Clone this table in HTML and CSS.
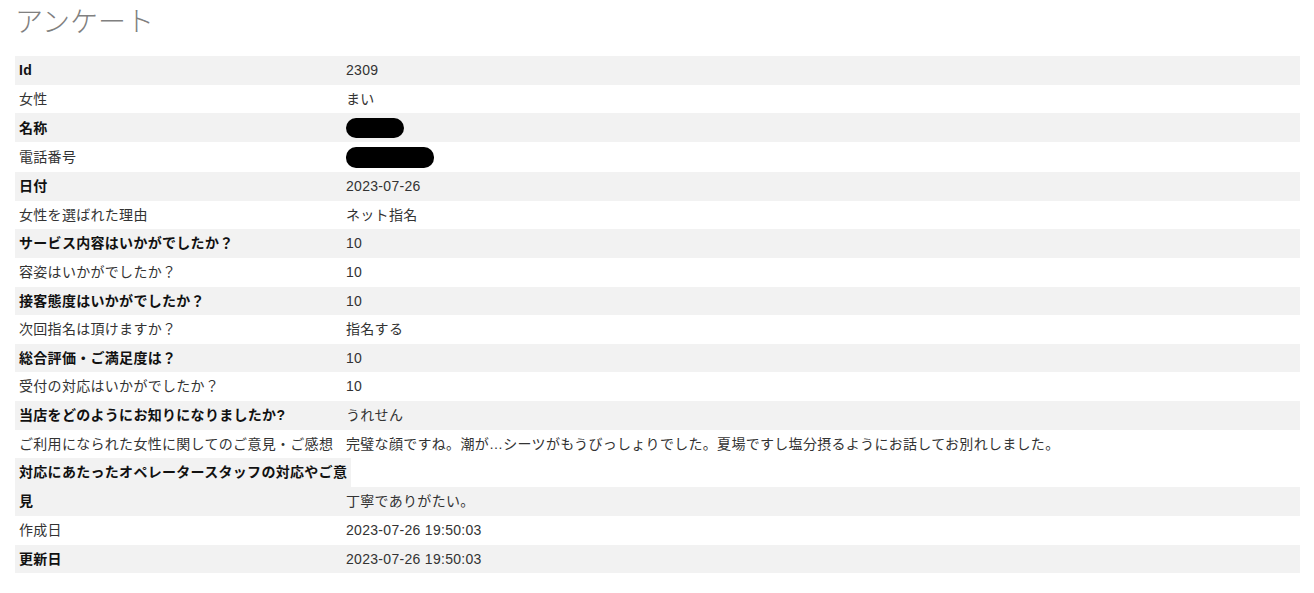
FILE: index.html
```html
<!DOCTYPE html>
<html lang="ja">
<head>
<meta charset="utf-8">
<title>アンケート</title>
<link rel="stylesheet" href="styles.css">
</head>
<body>
<div class="page">
  <h1 class="title">アンケート</h1>
  <dl class="details">
    <div class="row"><dt>Id</dt><dd>2309</dd></div>
    <div class="row"><dt>女性</dt><dd>まい</dd></div>
    <div class="row"><dt>名称</dt><dd><span class="redact redact-name"></span></dd></div>
    <div class="row"><dt>電話番号</dt><dd><span class="redact redact-phone"></span></dd></div>
    <div class="row"><dt>日付</dt><dd>2023-07-26</dd></div>
    <div class="row"><dt>女性を選ばれた理由</dt><dd>ネット指名</dd></div>
    <div class="row"><dt>サービス内容はいかがでしたか？</dt><dd>10</dd></div>
    <div class="row"><dt>容姿はいかがでしたか？</dt><dd>10</dd></div>
    <div class="row"><dt>接客態度はいかがでしたか？</dt><dd>10</dd></div>
    <div class="row"><dt>次回指名は頂けますか？</dt><dd>指名する</dd></div>
    <div class="row"><dt>総合評価・ご満足度は？</dt><dd>10</dd></div>
    <div class="row"><dt>受付の対応はいかがでしたか？</dt><dd>10</dd></div>
    <div class="row"><dt>当店をどのようにお知りになりましたか?</dt><dd>うれせん</dd></div>
    <div class="row"><dt>ご利用になられた女性に関してのご意見・ご感想</dt><dd>完璧な顔ですね。潮が…シーツがもうびっしょりでした。夏場ですし塩分摂るようにお話してお別れしました。</dd></div>
    <div class="row row-wrap"><dt>対応にあたったオペレータースタッフの対応やご意<br>見</dt><dd>丁寧でありがたい。</dd></div>
    <div class="row"><dt>作成日</dt><dd>2023-07-26 19:50:03</dd></div>
    <div class="row"><dt>更新日</dt><dd>2023-07-26 19:50:03</dd></div>
  </dl>
</div>
</body>
</html>
```
FILE: styles.css
```css
html, body {
  margin: 0;
  padding: 0;
  background: #fff;
}

body {
  font-family: "Liberation Sans", "Noto Sans CJK JP", sans-serif;
  font-size: 14px;
  color: #333;
}

.page {
  padding: 0 14px 0 15px;
}

.title {
  margin: 0;
  padding-top: 0;
  height: 56px;
  font-family: "Noto Sans CJK JP", sans-serif;
  font-size: 28px;
  font-weight: 300;
  line-height: 40px;
  color: #808080;
}

.details {
  margin: 0;
  letter-spacing: 0.3px;
}

.row {
  display: grid;
  grid-template-columns: 327px 1fr;
  align-items: center;
}

.row:nth-child(odd) {
  background: #f2f2f2;
}

.row dt,
.row dd {
  margin: 0;
  padding: 4px;
  line-height: 20.6px;
  white-space: nowrap;
}

.row dt {
  font-weight: normal;
  color: #333;
}

.row:nth-child(odd) dt {
  font-weight: bold;
  color: #111;
}

.row-wrap {
  align-items: end;
}

.row.row-wrap {
  background: linear-gradient(#fff 0 29px, #f2f2f2 29px);
}

.row-wrap dt {
  justify-self: start;
  width: max-content;
  padding: 0 4px;
  line-height: 29px;
  background: #f2f2f2;
}

.row-wrap dd {
  padding: 0 4px;
  line-height: 29px;
}

.redact {
  display: inline-block;
  vertical-align: middle;
  height: 20px;
  background: #000;
  border-radius: 10px;
}

.redact-name {
  width: 58px;
}

.redact-phone {
  width: 88px;
  height: 21px;
}
```
